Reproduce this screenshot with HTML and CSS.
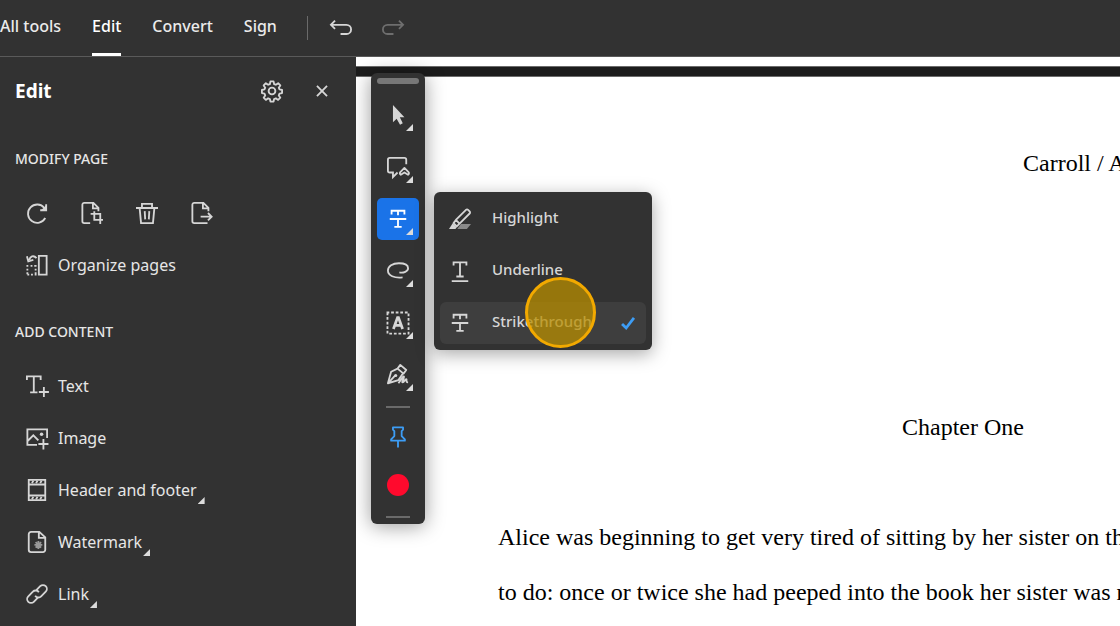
FILE: index.html
```html
<!DOCTYPE html>
<html lang="en">
<head>
<meta charset="utf-8">
<title>Edit PDF</title>
<link rel="stylesheet" href="styles.css">
</head>
<body>
<header class="topbar">
  <nav class="tabs">
    <a class="tab" href="#">All tools</a>
    <a class="tab tab-active" href="#" aria-current="page">Edit</a>
    <a class="tab" href="#">Convert</a>
    <a class="tab" href="#">Sign</a>
  </nav>
  <div class="history">
    <button class="icon-btn" aria-label="Undo"><svg class="icon" viewBox="0 0 24 24"><path d="M5.500 4L1 8.500L5.500 13M1 8.500H18a5 5 0 0 1 0 10H11.500"/></svg></button>
    <button class="icon-btn" aria-label="Redo" disabled><svg class="icon" viewBox="0 0 24 24"><path d="M18.500 4L23 8.500L18.500 13M23 8.500H6a5 5 0 0 0 0 10H12.500"/></svg></button>
  </div>
</header>
<div class="workspace">
  <aside class="sidebar">
    <div class="panel-head">
      <h1 class="panel-title">Edit</h1>
      <button class="icon-btn" aria-label="Settings"><svg class="icon" viewBox="0 0 24 24"><circle cx="12" cy="12" r="3.700"/><path stroke-linejoin="round" d="M10.300 1.500h3.400l.6 2.900 1.900.8 2.500-1.700 2.400 2.400-1.700 2.500.8 1.900 2.800.6v3.400l-2.800.6-.8 1.900 1.700 2.500-2.400 2.400-2.500-1.700-1.900.8-.6 2.700h-3.400l-.6-2.700-1.900-.8-2.500 1.700-2.400-2.400 1.700-2.500-.8-1.900-2.800-.6v-3.400l2.800-.6.8-1.900-1.700-2.500 2.400-2.400 2.500 1.700 1.900-.8z"/></svg></button>
      <button class="icon-btn" aria-label="Close"><svg class="icon" viewBox="0 0 24 24"><path d="M6.500 6.500l11 11M17.500 6.500L6.500 17.500"/></svg></button>
    </div>
    <section class="group">
      <h2 class="group-title">MODIFY PAGE</h2>
      <div class="quick">
        <button class="icon-btn" aria-label="Rotate"><svg class="icon" viewBox="0 0 24 24"><path d="M21 17.500A10 10 0 1 1 20 6.500M22 2.500V9H15.500"/><path class="solid" d="M22.500 3V9.500H16Z"/></svg></button>
        <button class="icon-btn" aria-label="Crop page"><svg class="icon" viewBox="0 0 24 24"><path d="M10 23H3.500a2 2 0 0 1-2-2V3a2 2 0 0 1 2-2H13.500L19 6.500V10M13 1V7H19M14.500 10V19.500H24M10.500 13H21V24"/></svg></button>
        <button class="icon-btn" aria-label="Delete page"><svg class="icon" viewBox="0 0 24 24"><path d="M0 6.500H24M6.500 6V2H17.500V6M4 7L5.500 23H18.500L20 7M9.500 10L10 19M14.500 10L14 19"/></svg></button>
        <button class="icon-btn" aria-label="Extract page"><svg class="icon" viewBox="0 0 24 24"><path d="M18 23H3.500a2 2 0 0 1-2-2V3a2 2 0 0 1 2-2H13.500L19 6.500V10M13 1V7H19M10.500 16H22.500M18.500 12L22.500 16L18.500 20"/></svg></button>
      </div>
      <button class="row"><svg class="icon" viewBox="0 0 24 24"><path d="M14 2H22.500V22.500H14ZM11.500 4.500C8 0.500 4.500 3 3.500 6.500M1 2.500L2.500 8L8 6.500"/><path class="dots" d="M1.500 12V23M1.500 22.500H12M10.500 12V22M5 13H11"/></svg><span>Organize pages</span></button>
    </section>
    <section class="group">
      <h2 class="group-title">ADD CONTENT</h2>
      <button class="row"><svg class="icon" viewBox="0 0 24 24"><path d="M1 5.500V1.500H16V5.500M8.500 2V19M4.500 19H12.500M19.500 13V24M14 18.500H25"/></svg><span>Text</span></button>
      <button class="row"><svg class="icon" viewBox="0 0 24 24"><path d="M12 19.500H1.500V2.500H23V12M2 15L8 9L13.500 14.500M19 13V24.500M13.500 18.500H24.500"/><circle class="solid" cx="17" cy="8" r="1.900"/></svg><span>Image</span></button>
      <button class="row"><svg class="icon" viewBox="0 0 24 24"><path d="M3 1H21V23H3ZM3 6H21M3 18H21"/><path d="M6.500 4.500L8 2M11 4.500L12.500 2M15.500 4.500L17 2M6.500 22L8 19.500M11 22L12.500 19.500M15.500 22L17 19.500"/></svg><span class="more">Header and footer</span></button>
      <button class="row"><svg class="icon" viewBox="0 0 24 24"><path d="M14.500 1H5.500A2.500 2.500 0 0 0 3 3.500V20.500A2.500 2.500 0 0 0 5.500 23H18.500A2.500 2.500 0 0 0 21 20.500V7ZM14 1V7.500H21"/><path class="muted" d="M13.500 11V19.500M9.200 15.200H17.800M10.500 12.200L16.500 18.200M16.500 12.200L10.500 18.200"/><circle class="muted" cx="13.500" cy="15.200" r="1.500"/></svg><span class="more">Watermark</span></button>
      <button class="row"><svg class="icon" viewBox="0 0 24 24"><path d="M10.500 8.500L15.500 3.500a4.200 4.200 0 0 1 6 6L16.500 14.500a4.200 4.200 0 0 1-6.500-.5M13.500 15.500L8.500 20.500a4.200 4.200 0 0 1-6-6L7.500 9.500a4.200 4.200 0 0 1 6.500.5"/></svg><span class="more">Link</span></button>
    </section>
  </aside>
  <main class="viewer">
    <div class="page-gap"></div>
    <article class="page">
      <p class="running-head">Carroll / Alice</p>
      <h2 class="chapter">Chapter One</h2>
      <p class="prose">Alice was beginning to get very tired of sitting by her sister on the<br>to do: once or twice she had peeped into the book her sister was reading</p>
    </article>

    <div class="palette" role="toolbar" aria-label="Quick tools">
      <div class="grip"></div>
      <button class="tool more" aria-label="Select"><svg class="icon" viewBox="0 0 24 24"><path class="solid" d="M6.500 1V20L10.500 16L14.200 22.500L17.200 21L14 14.500H19Z"/></svg></button>
      <button class="tool more" aria-label="Comment"><svg class="icon" viewBox="0 0 24 24"><path d="M21 9V4a2 2 0 0 0-2-2H3a2 2 0 0 0-2 2V16a2 2 0 0 0 2 2H6.500V23L11.500 18"/><path stroke-linejoin="round" d="M15 20.500a2 2 0 0 1-.5-3L19 13L23.500 17.500a2 2 0 0 1-.5 3L19 18Z"/></svg></button>
      <button class="tool tool-active more" aria-label="Strikethrough"><svg class="icon" viewBox="0 0 24 24"><path d="M5 7V3H19V7M12 3V8M3 12H21M12 12V20.500M8 20.500H16"/></svg></button>
      <button class="tool more" aria-label="Draw"><svg class="icon" viewBox="0 0 24 24"><path d="M13.500 13.500C18 14.500 23 12.500 23 9C23 5 18 3.500 13 3.500C6 3.500 1 7 1 11.500C1 17 8 20 17 19"/></svg></button>
      <button class="tool more" aria-label="Add text box"><svg class="icon" viewBox="0 0 24 24"><path class="dash" d="M.5 .5H23.500V23.500H.5Z"/><path class="bold" d="M7 18.500L11.500 6H12.500L17 18.500M8.500 14.500H15.500"/></svg></button>
      <button class="tool more" aria-label="Sign"><svg class="icon" viewBox="0 0 24 24"><path stroke-linejoin="round" d="M11.500 5L14.500 1L21 6.500L18 10.500ZM11.500 5L4.500 8.500L1 21L12.500 17.500L17.500 10M2 20L9 12.500M12.500 21C15 18 18 12 18.500 14C18.800 16 15.500 20 17 20C19 20 19.500 16.500 21 16.500C22 16.500 20 20 23 20"/><circle class="solid" cx="9.500" cy="12.500" r="1.700"/></svg></button>
      <hr class="rule">
      <button class="mini" aria-label="Pin toolbar"><svg class="icon icon-pin" viewBox="0 0 24 24"><path stroke-linejoin="round" d="M6.500 1.500H17.500V4L16 5.500V11L19.500 14.500V16H4.500V14.500L8 11V5.500L6.500 4ZM12 16V23.500"/></svg></button>
      <button class="mini" aria-label="Color"><span class="swatch"></span></button>
      <hr class="rule rule-end">
    </div>

    <div class="menu" role="menu">
      <button class="menu-item" role="menuitem"><svg class="icon" viewBox="0 0 24 24"><path class="muted-fill" d="M13 17.500H24L19.500 23H9Z"/><path stroke-linejoin="round" d="M7.500 13L18.500 2a1.600 1.600 0 0 1 2.300 0L22.500 3.700a1.600 1.600 0 0 1 0 2.300L11.500 17ZM7.500 13L5 16.500L8.500 20L11.500 17"/><path class="solid" d="M4 16.500L8.500 21L7 23H0Z"/></svg><span class="menu-label">Highlight</span></button>
      <button class="menu-item" role="menuitem"><svg class="icon" viewBox="0 0 24 24"><path d="M5 6V2.500H19V6M12 3V18M8 18H16M3 23H21"/></svg><span class="menu-label">Underline</span></button>
      <button class="menu-item menu-item-on" role="menuitem"><svg class="icon" viewBox="0 0 24 24"><path d="M5 7V3H19V7M12 3V8M3 12H21M12 12V20.500M8 20.500H16"/></svg><span class="menu-label">Strikethrough</span><svg class="icon icon-check" viewBox="0 0 24 24"><path d="M5.500 13L10 17.500L18.500 6.500"/></svg></button>
      <span class="pointer-ring"></span>
    </div>
  </main>
</div>
</body>
</html>
```
FILE: styles.css
```css
* { box-sizing: border-box; }

body {
  margin: 0;
  height: 100vh;
  display: flex;
  flex-direction: column;
  overflow: hidden;
  background: #323232;
  color: #e6e6e6;
  font: 16px/24px "Noto Sans", "Open Sans", sans-serif;
}

button {
  margin: 0;
  padding: 0;
  border: 0;
  background: none;
  color: inherit;
  font: inherit;
  text-align: left;
}

h1, h2, p { margin: 0; }

.icon {
  display: block;
  flex: none;
  width: 24px;
  height: 24px;
  padding: 1px;
  overflow: visible;
  fill: none;
  stroke: #d6d6d6;
  stroke-width: 2;
}

.solid { fill: #d6d6d6; stroke: none; }
.bold { stroke-width: 3; }
.dots { stroke-dasharray: 2 2; }
.dash { stroke-dasharray: 3 2; stroke-dashoffset: 1; }
.muted { stroke: #9a9a9a; }
.muted-fill { fill: #8a8a8a; stroke: none; }

/* Top bar */
.topbar {
  display: flex;
  flex: none;
  align-items: center;
  height: 57px;
  border-bottom: 1px solid #5a5a5a;
}

.tabs { display: flex; gap: 31px; height: 100%; }

.tab {
  display: flex;
  align-items: center;
  padding-bottom: 1px;
  border-bottom: 3px solid transparent;
  color: #ebebeb;
  font-weight: 500;
  text-decoration: none;
  white-space: nowrap;
}

.tab-active { border-bottom-color: #fff; color: #fff; }

.history {
  display: flex;
  gap: 28px;
  margin-left: 30px;
  padding-left: 21px;
  border-left: 1px solid #6a6a6a;
}

.icon-btn { display: block; }
.icon-btn:disabled .icon { stroke: #6e6e6e; }

.workspace { display: flex; flex: 1; min-height: 0; }

/* Side panel */
.sidebar {
  flex: none;
  width: 356px;
  overflow: hidden;
}

.panel-head {
  display: flex;
  align-items: center;
  gap: 26px;
  height: 68px;
  padding: 0 22px 0 15px;
}

.panel-title {
  flex: 1;
  color: #fff;
  font-size: 19px;
  font-weight: 700;
  line-height: 24px;
}

.group { padding: 24px 0 7px; }

.group-title {
  margin: 0 15px 18px;
  font-size: 14px;
  font-weight: 500;
  line-height: 20px;
}

.quick {
  display: flex;
  align-items: center;
  gap: 31px;
  height: 52px;
  padding-left: 25px;
}

.row {
  display: flex;
  align-items: center;
  gap: 9px;
  width: 100%;
  height: 52px;
  padding-left: 25px;
}

/* Corner mark on items that open a submenu */
.more { position: relative; }

.more::after {
  content: "";
  position: absolute;
  right: 6px;
  bottom: 5px;
  width: 7px;
  height: 7px;
  background: #dcdcdc;
  clip-path: polygon(100% 0, 100% 100%, 0 100%);
}

.row .more::after { right: -8px; bottom: -2px; }

/* Document */
.viewer {
  position: relative;
  flex: 1;
  min-width: 0;
  overflow: hidden;
  padding-top: 9px;
  background: #fff;
}

.page-gap {
  height: 11px;
  border: solid #6b6b6b;
  border-width: 1px 0;
  background: #1c1c1c;
}

.page {
  width: 1072px;
  padding: 59px 0 0 142px;
  color: #000;
  font: 24px/55px "Liberation Serif", "Times New Roman", serif;
}

.running-head { padding-left: 525px; }

.chapter {
  margin: 209px 0 55px;
  font-size: 24px;
  font-weight: 400;
  text-align: center;
}

.prose { white-space: nowrap; }

/* Floating tool palette */
.palette {
  position: absolute;
  top: 16px;
  left: 15px;
  display: flex;
  flex-direction: column;
  align-items: center;
  gap: 10px;
  width: 54px;
  padding: 5px 0 6px;
  border-radius: 6px;
  background: #323232;
  box-shadow: 0 2px 20px rgba(0, 0, 0, 0.4);
}

.grip {
  width: 42px;
  height: 6px;
  border-radius: 3px;
  background: #777;
}

.tool {
  display: grid;
  place-items: center;
  width: 42px;
  height: 42px;
  border-radius: 5px;
}

.tool-active { background: #1a73e8; }
.tool-active .icon { stroke: #fff; }

.rule {
  width: 24px;
  height: 2px;
  margin: 0;
  border: 0;
  background: #6a6a6a;
}

.rule-end { margin-top: 2px; }

.mini { display: grid; place-items: center; height: 38px; }
.icon-pin, .icon-check { stroke: #3d9df5; }

.swatch {
  display: block;
  width: 22px;
  height: 22px;
  border-radius: 50%;
  background: #ff0a2d;
}

/* Text markup menu */
.menu {
  position: absolute;
  top: 135px;
  left: 78px;
  display: flex;
  flex-direction: column;
  gap: 10px;
  width: 218px;
  padding: 6px;
  border-radius: 6px;
  background: #323232;
  box-shadow: 0 4px 18px rgba(0, 0, 0, 0.35);
}

.menu-item {
  display: flex;
  align-items: center;
  gap: 20px;
  height: 42px;
  padding: 0 6px 0 8px;
  border-radius: 6px;
  color: #d6d6d6;
  font-size: 15px;
  font-weight: 500;
}

.menu-label { padding-bottom: 4px; }
.menu-item-on { background: #3e3e3e; }
.icon-check { margin-left: auto; stroke-width: 3; }

.pointer-ring {
  position: absolute;
  top: 85px;
  left: 91px;
  width: 71px;
  height: 71px;
  border: 3px solid #f2a900;
  border-radius: 50%;
  background: rgba(184, 142, 0, 0.75);
}
```
